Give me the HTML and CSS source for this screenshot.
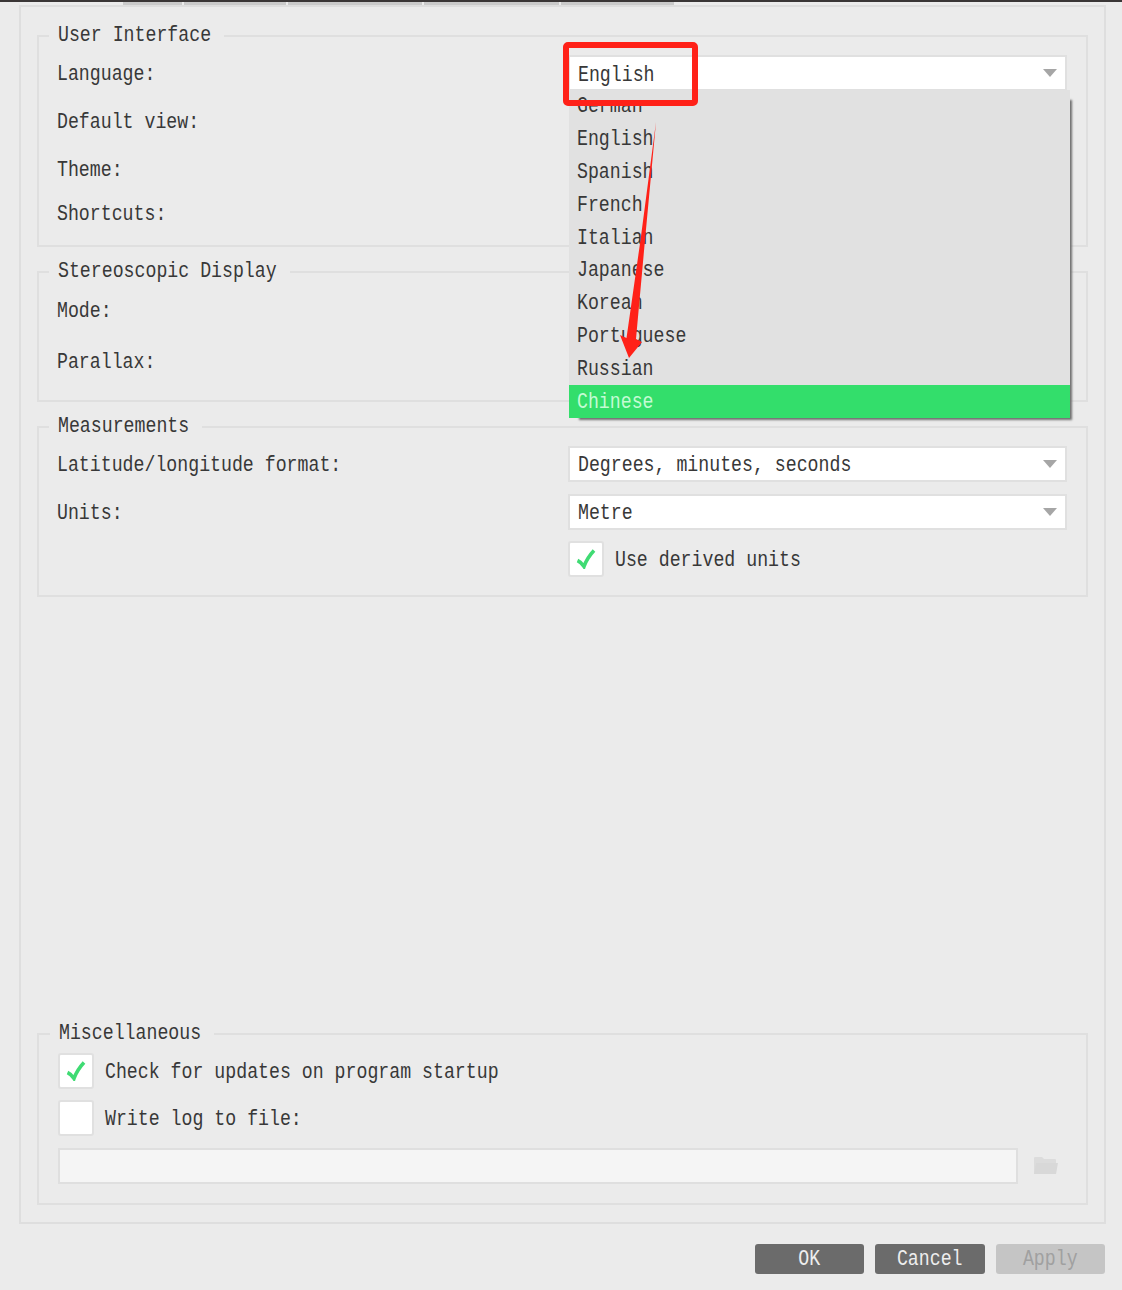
FILE: index.html
```html
<!DOCTYPE html>
<html lang="en">
<head>
<meta charset="utf-8">
<title>Preferences</title>
<link rel="stylesheet" href="styles.css">
</head>
<body>
<div class="tabs"><i class="tab w1"></i><i class="tab w2"></i><i class="tab w3"></i><i class="tab w4"></i><i class="tab w5"></i></div>
<main class="panel">
  <fieldset class="group ui">
    <legend><span class="t">User Interface</span></legend>
    <div class="row r1">
      <span class="t label">Language:</span>
      <div class="combo open">
        <span class="t">English</span>
        <svg class="caret" width="14" height="8" viewBox="0 0 14 8"><path d="M0 0H14L7 8Z"/></svg>
        <ul class="popup">
          <li><span class="t">German</span></li>
          <li><span class="t">English</span></li>
          <li><span class="t">Spanish</span></li>
          <li><span class="t">French</span></li>
          <li><span class="t">Italian</span></li>
          <li><span class="t">Japanese</span></li>
          <li><span class="t">Korean</span></li>
          <li><span class="t">Portuguese</span></li>
          <li><span class="t">Russian</span></li>
          <li class="selected"><span class="t">Chinese</span></li>
        </ul>
        <div class="highlight"></div>
        <svg class="arrow" width="40" height="240" viewBox="0 0 40 240"><path d="M37 1L26 119L17 218L23 221L10 237L1 214L7.500 217L21.500 119Z"/></svg>
      </div>
    </div>
    <div class="row r1"><span class="t label">Default view:</span></div>
    <div class="row r3"><span class="t label">Theme:</span></div>
    <div class="row r4"><span class="t label">Shortcuts:</span></div>
  </fieldset>
  <fieldset class="group stereo">
    <legend><span class="t">Stereoscopic Display</span></legend>
    <div class="row r5"><span class="t label">Mode:</span></div>
    <div class="row r6"><span class="t label">Parallax:</span></div>
  </fieldset>
  <fieldset class="group measure">
    <legend><span class="t">Measurements</span></legend>
    <div class="row r1">
      <span class="t label">Latitude/longitude format:</span>
      <div class="combo"><span class="t">Degrees, minutes, seconds</span><svg class="caret" width="14" height="8" viewBox="0 0 14 8"><path d="M0 0H14L7 8Z"/></svg></div>
    </div>
    <div class="row r1">
      <span class="t label">Units:</span>
      <div class="combo"><span class="t">Metre</span><svg class="caret" width="14" height="8" viewBox="0 0 14 8"><path d="M0 0H14L7 8Z"/></svg></div>
    </div>
    <div class="row r7">
      <span class="label"></span>
      <span class="check"><svg width="20" height="20" viewBox="0 0 20 20"><path d="M1.500 11.500Q5 13 8 17.500Q11 9 18 1.500"/></svg></span>
      <span class="t">Use derived units</span>
    </div>
  </fieldset>
  <fieldset class="group misc">
    <legend><span class="t">Miscellaneous</span></legend>
    <div class="row r8">
      <span class="check"><svg width="20" height="20" viewBox="0 0 20 20"><path d="M1.500 11.500Q5 13 8 17.500Q11 9 18 1.500"/></svg></span>
      <span class="t">Check for updates on program startup</span>
    </div>
    <div class="row r8">
      <span class="check"></span>
      <span class="t">Write log to file:</span>
    </div>
    <div class="row r8 path">
      <div class="field"></div>
      <svg class="folder" width="24" height="18" viewBox="0 0 24 18"><path class="back" d="M0 1Q0 0 1 0H8L10 2H21Q22 2 22 3V17H0Z"/><path class="front" d="M0 17L2 6H24L22 17Z"/></svg>
    </div>
  </fieldset>
</main>
<footer class="buttons">
  <span class="button"><span class="t">OK</span></span>
  <span class="button"><span class="t">Cancel</span></span>
  <span class="button disabled"><span class="t">Apply</span></span>
</footer>
</body>
</html>
```
FILE: styles.css
```css
* { box-sizing: border-box; }
body {
  margin: 0;
  width: 1122px;
  height: 1290px;
  overflow: hidden;
  display: flex;
  flex-direction: column;
  background: #ebebeb;
  border-top: 2px solid #3a3636;
  color: #383838;
  font: 18.23px/22px "Liberation Mono", monospace;
}
/* Tall, narrow terminal-style lettering */
.t { display: inline-block; white-space: pre; transform: scaleY(1.18); }
.row > .t, .combo > .t { transform: translateY(1px) scaleY(1.18); }
.ui .combo > .t { transform: translateY(2px) scaleY(1.18); }
.stereo .row > .t { transform: scaleY(1.18); }
legend .t { transform: translate(-1px, -1px) scaleY(1.18); }

.tabs { display: flex; gap: 2px; height: 3px; padding-left: 123px; flex: none; }
.tab { background: #cacaca; }
.w1 { width: 59px; }
.w2 { width: 102px; }
.w3 { width: 134px; }
.w4 { width: 135px; }
.w5 { width: 113px; }

.panel {
  flex: none;
  height: 1219px;
  margin: 0 16px 0 19px;
  padding: 18px 16px 17px;
  border: 2px solid #dedede;
  display: flex;
  flex-direction: column;
  gap: 14px;
}
.group {
  flex: none;
  min-width: 0;
  margin: 0;
  padding: 2px 18px 0;
  border: 2px solid #dfdfdf;
}
legend { height: 22px; margin-left: -8px; padding: 0 12px 0 10px; }
.ui { height: 222px; }
.stereo { height: 141px; }
.measure { height: 181px; }
.misc { height: 182px; margin-top: auto; padding: 2px 17px 0 19px; }

.row { display: flex; align-items: center; }
.label { width: 511px; flex: none; }
.r1 { height: 48px; }
.r3 { height: 47px; }
.r4 { height: 42px; }
.r5 { height: 52px; }
.r6 { height: 50px; }
.r7 { height: 46px; }
.r8 { height: 47.5px; }

.combo {
  position: relative;
  width: 499px;
  height: 36px;
  padding: 0 8px;
  border: 2px solid #e0e0e0;
  background: #fff;
  display: flex;
  align-items: center;
  justify-content: space-between;
}
.caret { fill: #a6a6a6; margin-top: -1px; }
.popup {
  position: absolute;
  z-index: 1;
  top: 33px;
  left: -1px;
  width: 501px;
  height: 328px;
  margin: 0;
  padding: 0;
  list-style: none;
  background: #e1e1e1;
  box-shadow: 6px 6px 2px -4px #707070;
}
.popup li { height: 32.8px; padding-left: 8px; display: flex; align-items: center; }
.popup .selected { background: #33de6b; color: #c4fbd4; }
.highlight {
  position: absolute;
  z-index: 2;
  top: -15px;
  left: -7px;
  width: 135px;
  height: 64px;
  border: 6px solid #ff2118;
  border-radius: 5px;
}
.arrow { position: absolute; z-index: 2; top: 64px; left: 49px; fill: #ff2118; }

.check {
  flex: none;
  width: 36px;
  height: 36px;
  margin-right: 11px;
  border: 2px solid #e0e0e0;
  border-radius: 3px;
  background: #fff;
  display: flex;
  align-items: center;
  justify-content: center;
}
.check path { fill: none; stroke: #3fdb73; stroke-width: 3.6; }

.path { gap: 16px; }
.field { width: 960px; height: 36px; border: 2px solid #dfdfdf; background: #f5f5f5; }
.back { fill: #dcdcdc; }
.front { fill: #d8d8d8; }

.buttons { display: flex; justify-content: flex-end; gap: 11px; padding: 20px 17px 0 0; }
.button {
  width: 109.5px;
  height: 30px;
  border-radius: 3px;
  background: #6b6b6b;
  color: #eee;
  display: flex;
  align-items: center;
  justify-content: center;
}
.disabled { background: #c5c5c5; color: #a0a0a0; }
```
